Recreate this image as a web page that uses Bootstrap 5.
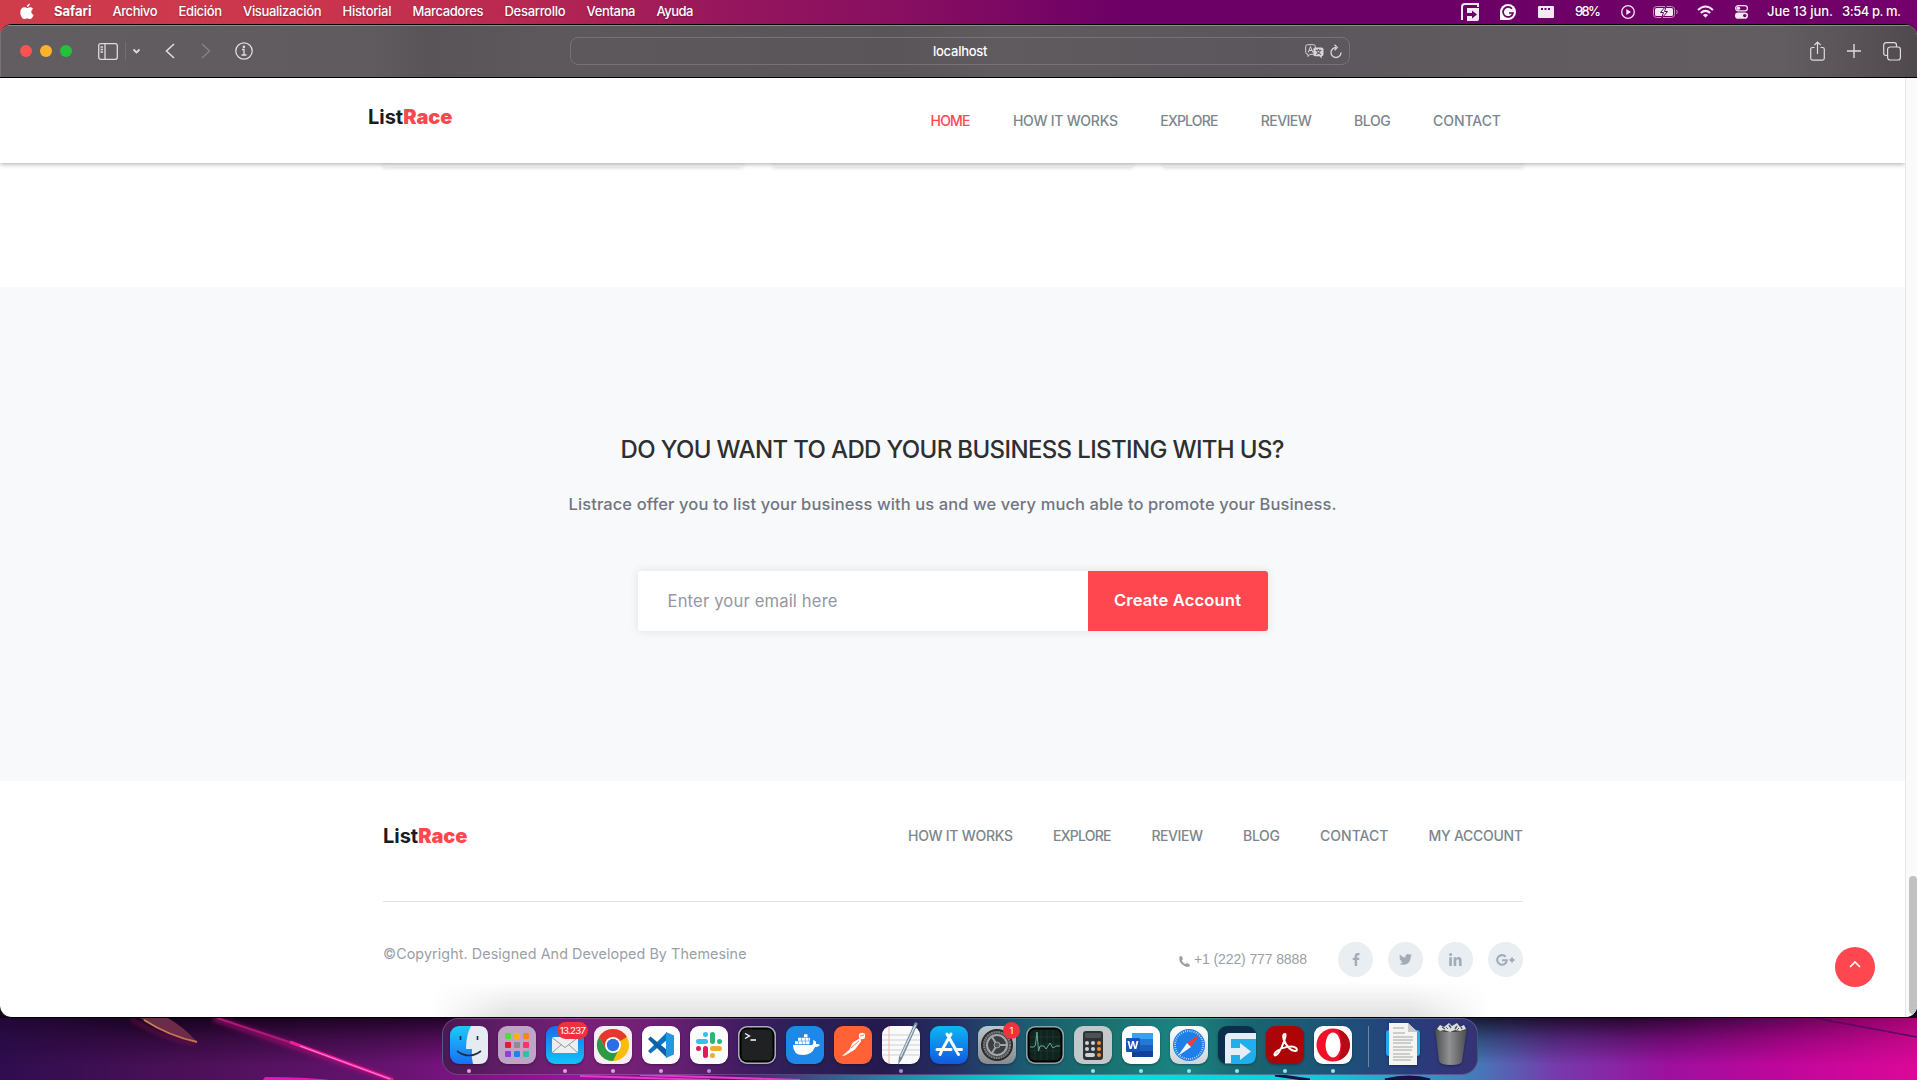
<!DOCTYPE html>
<html lang="es">
<head>
<meta charset="utf-8">
<title>ListRace</title>
<link href="https://cdn.jsdelivr.net/npm/bootstrap@5.3.0/dist/css/bootstrap.min.css" rel="stylesheet">
<style>
:root{--brand:#ff474f}
html,body{height:1080px;overflow:hidden}
body{background:#230a2e;font-family:Inter,"Open Sans",sans-serif;margin:0}
svg{display:block;flex:none}
.fit{display:block;white-space:nowrap;flex:none}
.backdrop-top{background:linear-gradient(90deg,#cf3d4b 0,#cb344d 320px,#b82851 520px,#95165d 730px,#850d61 930px,#6d0066 1120px,#6d0066 1500px,#74016b 1917px) 0 0/100% 60px no-repeat,#12021a}
.menubar{height:24px;color:#fff;font-size:13px;font-weight:500;line-height:23px;padding:0 16px 1px 20px;text-shadow:0 1px 2px #0005}
.menus{gap:21px}
.menus .fit:nth-child(2){margin-left:-1px}
.mac-window{height:994px;border-radius:12px;border:1px solid #000;border-width:1px 0 1px 0;background:#fff;overflow:hidden;position:relative}
.toolbar{height:53px;background:linear-gradient(90deg,#625d61 0,#605b5f 370px,#595457 430px,#5d585c 550px,#5a5559 900px,#605b5f 1000px,#5b565b 1270px,#605b5f 1500px,#625d61 1780px,#575155 1870px,#4f494d 1917px);border-bottom:1px solid #000;box-shadow:inset 0 1px #8e8a8d,inset 1px 0 #777276;flex:none;color:#dedbde}
.light{width:12px;height:12px;border-radius:50%}
.url{width:780px;height:28px;border:1px solid #767276;border-radius:8px;color:#fff;font-size:13px;font-weight:500;padding:0 7px 0 362px;margin-left:-1px;margin-right:1px}
.url .fit{padding-top:1px}
.page{height:939px;flex:none}
.page main{overflow:hidden}
.gutter{width:12px;background:#fafafa;border-left:1px solid #e6e6e6;padding:798px 0 0 3px}
.thumb{width:8px;height:138px;background:#c1c1c1;border-radius:4px}
.site-head{height:85px;background:#fff;box-shadow:0 1px 5px rgba(0,0,0,.34);padding:0 404px 0 368px;position:relative;z-index:2}
.logo{font-weight:700;font-size:20px;line-height:24px;color:#1b1c1e}
.logo b,.on{color:var(--brand)!important}
.links{font-size:14px;font-weight:550;line-height:20px;color:#7b868d}
.g42{gap:42.4px}.g40{gap:40px}
.cards-end{height:124px;padding-left:383px;gap:30px}
.cards-end div{width:360px;height:4px;background:#f7f7f8;box-shadow:0 1px 4px rgba(0,0,0,.14)}
.subscribe{height:494px;background:#f8f9fb;padding-top:145px}
.subscribe h2{font-size:24px;font-weight:550;line-height:36px;color:#2e2f31;margin:0}
.subscribe p{font-size:16.500px;font-weight:500;line-height:24px;color:#71767f;margin:24px 0 55px}
.mailbox{width:630px;height:60px;border-radius:3px;overflow:hidden;background:#fff}
.mail-shadow{border-radius:3px;box-shadow:0 0 10px rgba(71,80,92,.14)}
.mail-hint{width:450px;padding-left:30px;font-size:16.600px;color:#9298a5}
.mail-go{width:180px;background:var(--brand);color:#fff;font-weight:600;font-size:16.600px;padding-bottom:2px}
.site-foot{padding:0 382px 0 383px;height:235px}
.foot-top{height:121px;border-bottom:1px solid #dfe2e6;padding-bottom:10px}
.foot-bottom{height:115px}
.copy{font-size:14.300px;color:#9aa0a6;padding-bottom:12px}
.tel{font-family:"Liberation Sans",Arial,sans-serif;font-size:14px;color:#999fa6;gap:4px;margin-right:31px}
.soc{width:35px;height:35px;border-radius:50%;background:#e9eef3;color:#a4abb8}
.to-top{position:absolute;left:1835px;top:922px;width:40px;height:40px;border-radius:50%;background:var(--brand)}
.dock-haze{position:absolute;left:430px;top:957px;width:1060px;height:36px;background:linear-gradient(#0000,#0000001f);-webkit-mask:linear-gradient(90deg,#0000,#000 80px,#000 980px,#0000);mask:linear-gradient(90deg,#0000,#000 80px,#000 980px,#0000)}
.desktop{height:62px;position:relative}
.wall{position:absolute;left:0;top:0;z-index:-1}
.dock{position:relative;width:1036px;height:57px;margin-left:442px;border-radius:16px;border:1px solid #ffffff2e;background:linear-gradient(90deg,#4a1954 0,#631d69 70px,#7b2079 150px,#6d2075 220px,#401c60 300px,#2f2058 340px,#241a4d 440px,#263064 510px,#1c5a70 580px,#19716f 660px,#1a8583 740px,#19666f 800px,#1d5179 900px,#293c7c 970px,#363274 1036px);padding:7px 7px 0}
.app{width:38px;height:38px;position:relative;margin-right:10px;flex:none}
.app>svg{overflow:visible;filter:drop-shadow(0 1px 1px #0005)}
.run::after{content:"";position:absolute;left:17px;top:43px;width:4px;height:4px;border-radius:50%;background:#8ee8f2}
.run.pk::after{background:#e49be0}.run.lv::after{background:#a78fd8}
.note{position:absolute;top:-4px;height:17px;border-radius:9px;background:#f0323c;color:#fff;font-size:9.600px;line-height:17px;text-align:center}
.dsep{width:1px;height:41px;background:#ffffff55;margin:0 20px 0 6px}
</style>
</head>
<body>
<svg width="0" height="0" class="position-absolute"><defs>
<linearGradient id="blu" x2="0" y2="1"><stop stop-color="#1ec8fb"/><stop offset="1" stop-color="#1671f5"/></linearGradient>
<linearGradient id="blu2" x2="0" y2="1"><stop stop-color="#0db6f5"/><stop offset="1" stop-color="#1259df"/></linearGradient>
<linearGradient id="mailg" x2="0" y2="1"><stop stop-color="#1a6af0"/><stop offset="1" stop-color="#10c4fb"/></linearGradient>
<linearGradient id="gry" x2="0" y2="1"><stop stop-color="#fff"/><stop offset="1" stop-color="#cfd4d8"/></linearGradient>
<linearGradient id="met" x2="0" y2="1"><stop stop-color="#b8c8cc"/><stop offset="1" stop-color="#8a8b8c"/></linearGradient>
<linearGradient id="bin"><stop stop-color="#4c4e50"/><stop offset=".45" stop-color="#8f9193"/><stop offset="1" stop-color="#4a4b4d"/></linearGradient>
</defs></svg>

<div class="backdrop-top">
<header class="menubar d-flex justify-content-between align-items-center">
  <div class="menus d-flex align-items-center">
    <svg width="14" height="18" viewBox="0 0 14 18" fill="#fff"><path d="M9.800.4C9.900 2 8.600 3.800 7 3.900 6.800 2.300 8.300.6 9.800.4ZM7.100 5C7.800 5 8.700 4.200 10 4.200c1.300 0 2.500.7 3.100 1.600-2.600 1.500-2.200 5 .5 6.100-.7 1.900-2.100 4.200-3.500 4.200-1.100 0-1.500-.7-2.900-.7s-1.800.7-2.800.7C2.500 16.100.3 12.700.3 9.400c0-3.300 2.100-5.100 4-5.100C5.600 4.300 6.400 5 7.100 5Z"/></svg>
    <span class="fit fw-bold" data-w="37.500">Safari</span><span class="fit" data-w="45">Archivo</span><span class="fit" data-w="43.500">Edición</span><span class="fit" data-w="78.500">Visualización</span><span class="fit" data-w="49">Historial</span><span class="fit" data-w="71">Marcadores</span><span class="fit" data-w="61">Desarrollo</span><span class="fit" data-w="49">Ventana</span><span class="fit" data-w="37">Ayuda</span>
  </div>
  <div class="d-flex align-items-center">
    <svg width="18" height="18" viewBox="0 0 18 18" fill="none" stroke="#f4e8f3"><path stroke-width="2" d="M1 17V4q0-3 3-3h13v3"/><path fill="#f4e8f3" stroke="none" d="M6 5h12v11q0 2-2 2H6Z"/><path d="M6 11h8M6 14.500h5" stroke="#6d0066" stroke-width="0"/><path d="M6 10h5V7.500l5 4-5 4V13H6Z" fill="#6d0066" stroke="none"/></svg>
    <svg style="margin-left:21px" width="16" height="16" viewBox="0 0 16 16"><path d="M8 0a8 8 0 1 1 0 16H0V8a8 8 0 0 1 8-8Z" fill="#fff"/><path d="M12 4.800A5 5 0 1 0 13 9H9" fill="none" stroke="#6d0066" stroke-width="1.700"/></svg>
    <svg style="margin-left:22px" width="16" height="12" viewBox="0 0 16 12"><rect width="16" height="12" rx="1" fill="#f4e8f3"/><path d="M3 3h2m1.500 0h2M10 3h2" stroke="#6d0066" stroke-width="2"/></svg>
    <span class="fit" style="margin-left:21px" data-w="26">98%</span>
    <svg style="margin-left:20px" width="14" height="14" viewBox="0 0 14 14" fill="none" stroke="#f4e8f3" stroke-width="1.300"><circle cx="7" cy="7" r="6.300"/><path d="M5.300 4v6L10 7Z" fill="#f4e8f3" stroke="none"/></svg>
    <svg style="margin-left:18px" width="25" height="12" viewBox="0 0 25 12" fill="none"><rect x=".5" y=".5" width="21" height="11" rx="3" stroke="#c58fc2"/><rect x="2" y="2" width="18" height="8" rx="1.500" fill="#f4e8f3"/><path d="M23.500 4q1.500 2 0 4" stroke="#c58fc2"/><path d="M13.500-.5 7.500 6.500h3L8.500 12.500l6-7h-3Z" fill="#fff" stroke="#6d0066"/></svg>
    <svg style="margin-left:19px" width="17" height="13" viewBox="0 0 17 13" fill="none" stroke="#f4e8f3" stroke-width="2.100"><path d="M1 5q7.500-7 15 0M3.800 8q4.700-4.300 9.400 0"/><path d="m8.500 12.800-2.600-2.900q2.600-2 5.200 0Z" fill="#f4e8f3" stroke="none"/></svg>
    <svg style="margin-left:21px" width="13" height="14" viewBox="0 0 13 14"><rect x=".6" y=".6" width="11.800" height="5.300" rx="2.600" fill="none" stroke="#f4e8f3" stroke-width="1.200"/><circle cx="3.400" cy="3.200" r="1.800" fill="#f4e8f3"/><rect y="7.500" width="13" height="6.300" rx="3.100" fill="#f4e8f3"/><circle cx="9.700" cy="10.600" r="1.700" fill="#6d0066"/></svg>
    <span class="fit" style="margin-left:19px" data-w="66">Jue 13 jun.</span><span class="fit" style="margin-left:9px" data-w="59">3:54 p. m.</span>
  </div>
</header>

<div class="mac-window d-flex flex-column">
  <div class="toolbar d-flex align-items-center justify-content-between" style="padding:0 16px 0 20px">
    <div class="d-flex align-items-center" style="width:550px">
      <div class="d-flex" style="gap:8px"><i class="light" style="background:#ff5350"></i><i class="light" style="background:#fdb12c"></i><i class="light" style="background:#23c23c"></i></div>
      <svg style="margin-left:26px" width="20" height="17" viewBox="0 0 20 17" fill="none" stroke="currentColor" stroke-width="1.300"><rect x=".7" y=".7" width="18.600" height="15.600" rx="2"/><path d="M7 1v15M2.500 4h2.500M2.500 6.500h2.500M2.500 9h2.500"/></svg>
      <svg style="margin-left:7px" width="16" height="18" viewBox="0 0 16 18" fill="none" stroke="currentColor"><path d="M.5 0v18" stroke="#736e72"/><path d="m8.500 7.500 3 3 3-3" stroke-width="1.800"/></svg>
      <svg style="margin-left:24px" width="10" height="16" viewBox="0 0 10 16" fill="none" stroke="currentColor" stroke-width="1.600"><path d="M9 1 1.500 8 9 15"/></svg>
      <svg style="margin-left:26px" width="10" height="16" viewBox="0 0 10 16" fill="none" stroke="#858085" stroke-width="1.500"><path d="m1 1 7.500 7L1 15"/></svg>
      <svg style="margin-left:24px" width="18" height="18" viewBox="0 0 18 18" fill="none" stroke="currentColor" stroke-width="1.300"><circle cx="9" cy="9" r="8.200"/><path d="M7 7.500h2V13M6.500 13h5" /><circle cx="8.900" cy="4.800" r=".7" fill="currentColor"/></svg>
    </div>
    <div class="url d-flex align-items-center justify-content-between"><span class="fit" data-w="54.500">localhost</span>
      <div class="d-flex align-items-center" style="gap:6px"><svg width="19" height="15" viewBox="0 0 19 15"><path d="M2.500.7h6q1.800 0 1.800 1.800v6q0 1.800-1.800 1.800H5L3 12.500V10.300q-2.300 0-2.300-1.800v-6Q.7.7 2.500.7Z" fill="none" stroke="#d7d4d7"/><path d="m3.200 8.500 2.300-6 2.300 6M4 6.500h3" fill="none" stroke="#d7d4d7"/><path d="M10 3.500h6.500q2 0 2 2v4.700q0 2-1.800 2V14.500l-2.300-2.300H10q-1.700 0-1.700-2V5.500q0-2 1.700-2Z" fill="#d7d4d7"/><path d="M10.500 6.300h6M13.500 5v1.300M15.500 6.500q-1 3-4.500 4M11.500 6.500q1 3 4.500 4" fill="none" stroke="#595457"/></svg>
      <svg width="12" height="15" viewBox="0 0 12 15" fill="none" stroke="#d7d4d7" stroke-width="1.300"><path d="M6 3.500a5 5 0 1 0 5 5M4.500.8 7.300 3.600 4.500 6.300"/></svg></div></div>
    <div class="d-flex align-items-center justify-content-end" style="width:549px;gap:22px">
      <svg width="15" height="20" viewBox="0 0 15 20" fill="none" stroke="currentColor" stroke-width="1.200"><path d="M4.500 6.500H2.500Q.7 6.500.7 8.300v9q0 1.800 1.800 1.800h10q1.800 0 1.800-1.800v-9q0-1.800-1.800-1.800h-2M7.500 13V1M4.300 4.200 7.500 1l3.200 3.200"/></svg>
      <svg width="14" height="14" viewBox="0 0 14 14" stroke="currentColor" stroke-width="1.400"><path d="M7 0v14M0 7h14"/></svg>
      <svg width="18" height="19" viewBox="0 0 18 19" fill="none" stroke="currentColor" stroke-width="1.200"><rect x="4.600" y="5" width="12.800" height="13" rx="2.500"/><path d="M4.500 13.500H3.200Q.7 13.500.7 11V3.200Q.7.700 3.200.700H11q2.500 0 2.500 2.500V5"/></svg>
    </div>
  </div>

  <div class="page d-flex">
    <main class="flex-grow-1">
      <nav class="site-head d-flex justify-content-between">
        <a class="logo fit text-decoration-none" style="margin-top:27px" data-w="84.500">List<b>Race</b></a>
        <div class="links d-flex g42" style="margin-top:33px"><span class="fit on" data-w="40">HOME</span><span class="fit" data-w="105">HOW IT WORKS</span><span class="fit" data-w="58">EXPLORE</span><span class="fit" data-w="51">REVIEW</span><span class="fit" data-w="36.500">BLOG</span><span class="fit" data-w="68">CONTACT</span></div>
      </nav>
      <div class="cards-end d-flex"><div></div><div></div><div></div></div>
      <section class="subscribe d-flex flex-column align-items-center">
        <h2 class="fit" data-w="664">DO YOU WANT TO ADD YOUR BUSINESS LISTING WITH US?</h2>
        <p class="fit" data-w="768">Listrace offer you to list your business with us and we very much able to promote your Business.</p>
        <div class="mail-shadow"><div class="mailbox d-flex">
          <div class="mail-hint d-flex align-items-center"><span class="fit" data-w="170">Enter your email here</span></div>
          <div class="mail-go d-flex align-items-center justify-content-center"><span class="fit" data-w="127">Create Account</span></div>
        </div></div>
      </section>
      <footer class="site-foot">
        <div class="foot-top d-flex justify-content-between align-items-center">
          <a class="logo fit text-decoration-none" data-w="84.500">List<b>Race</b></a>
          <div class="links d-flex g40"><span class="fit" data-w="105">HOW IT WORKS</span><span class="fit" data-w="58.500">EXPLORE</span><span class="fit" data-w="51.500">REVIEW</span><span class="fit" data-w="37">BLOG</span><span class="fit" data-w="68.500">CONTACT</span><span class="fit" data-w="94.500">MY ACCOUNT</span></div>
        </div>
        <div class="foot-bottom d-flex justify-content-between align-items-center">
          <span class="copy fit" data-w="363.500">©Copyright. Designed And Developed By Themesine</span>
          <div class="d-flex align-items-center">
            <div class="tel d-flex align-items-center"><svg width="11" height="11" viewBox="0 0 11 11" fill="#999fa6" style="margin-top:3px"><path d="M.5.500 2.500 0 4 3 2.800 4.500q1 2.500 3.500 3.600L8 7l3 1.700-.6 1.700Q8.500 11.500 5.500 10-.8 6.500.5.500Z"/></svg><span class="fit" data-w="113">+1 (222) 777 8888</span></div>
            <div class="d-flex" style="gap:15px">
              <span class="soc d-flex align-items-center justify-content-center"><svg width="8" height="13" viewBox="0 0 8 13" fill="currentColor"><path d="M7.500.1V2.200H6.300q-1.200 0-1.200 1.100v1.400h2.300l-.3 2.200h-2V13H2.700V6.900h-2V4.700h2V3Q2.700 0 5.700 0Z"/></svg></span>
              <span class="soc d-flex align-items-center justify-content-center"><svg width="13" height="11" viewBox="0 0 13 11" fill="currentColor"><path d="M13 1.300q-.5.800-1.300 1.400C11.800 7.500 8.500 10.800 4.100 10.800 2.600 10.800 1.200 10.400 0 9.600q2.200.2 3.900-1.100Q2 8.300 1.400 6.600h1.200Q.6 6 .5 3.900l1.200.3Q-.2 2.700.9.600 3.100 3.300 6.400 3.400C5.900.7 8.900-1 10.900.8L12.600.2q-.3.900-1.100 1.500Z"/></svg></span>
              <span class="soc d-flex align-items-center justify-content-center"><svg width="13" height="13" viewBox="0 0 13 13" fill="currentColor"><circle cx="1.600" cy="1.600" r="1.500"/><path d="M.2 4.200h2.700V13H.2ZM4.600 4.200h2.600v1.200Q8 4 9.600 4 12.600 4 12.600 7.600V13H9.900V8q0-1.800-1.300-1.800Q7.300 6.200 7.300 8v5H4.600Z"/></svg></span>
              <span class="soc d-flex align-items-center justify-content-center"><svg width="19" height="12" viewBox="0 0 19 12" fill="none" stroke="currentColor" stroke-width="2.100"><path d="M9.600 2.700A4.800 4.800 0 1 0 10.800 6.200H6M16 3.500v5M13.500 6h5"/></svg></span>
            </div>
          </div>
        </div>
      </footer>
    </main>
    <div class="gutter"><div class="thumb"></div></div>
  </div>
  <div class="dock-haze"></div>
  <div class="to-top d-flex justify-content-center"><svg style="margin-top:13px" width="12" height="8" viewBox="0 0 12 8" fill="none" stroke="#fff" stroke-width="1.700"><path d="m1 7 5-5 5 5"/></svg></div>
</div>
</div>

<div class="desktop">
  <svg class="wall" width="1917" height="62" viewBox="0 0 1917 62">
    <defs><linearGradient id="w"><stop stop-color="#2f0d4e"/><stop offset=".1" stop-color="#4c1058"/><stop offset=".2" stop-color="#64146e"/><stop offset=".3" stop-color="#a010a0"/><stop offset=".38" stop-color="#581568"/><stop offset=".5" stop-color="#10b0bc"/><stop offset=".55" stop-color="#00e4e0"/><stop offset=".68" stop-color="#08d2dc"/><stop offset=".76" stop-color="#3a88bc"/><stop offset=".81" stop-color="#743cac"/><stop offset=".87" stop-color="#9c109e"/><stop offset=".93" stop-color="#c0069c"/><stop offset="1" stop-color="#dc0898"/></linearGradient>
    <linearGradient id="sh" x2="0" y2="1"><stop stop-color="#0a0010" stop-opacity=".78"/><stop offset=".45" stop-color="#0a0010" stop-opacity=".35"/><stop offset="1" stop-color="#0a0010" stop-opacity="0"/></linearGradient>
    <linearGradient id="sh2"><stop stop-color="#777"/><stop offset=".08" stop-color="#fff"/><stop offset=".85" stop-color="#fff"/><stop offset="1" stop-color="#555"/></linearGradient>
    <mask id="mk"><rect width="1917" height="62" fill="url(#sh2)"/></mask><filter id="bl"><feGaussianBlur stdDeviation="2"/></filter></defs>
    <rect width="1917" height="62" fill="url(#w)"/>
    <rect width="1917" height="46" fill="url(#sh)" mask="url(#mk)"/>
    <path d="m213 0 180 62" stroke="#c00a80" stroke-width="7" opacity=".5" filter="url(#bl)"/>
    <path d="m217 0 78 26" stroke="#b21878" stroke-width="2"/><path d="m290 24 103 38" stroke="#f01c9c" stroke-width="3"/><path d="m300 28 90 33" stroke="#ff8fd0"/>
    <path d="M140 0h28q17 10 29 24Q167 18 140 0Z" fill="#6d2b4a"/><path d="M144 2q25 16 53 22" stroke="#c98350" stroke-width="1.800" fill="none"/><path d="M130 0q30 20 66 26" stroke="#a01848" stroke-width="3" opacity=".5" fill="none" filter="url(#bl)"/>
    <path d="m263 62 2-3q40 0 65 3Z" fill="#f010c0"/>
    <path d="m580 58 130 4M640 57l160 5" stroke="#e838d0" stroke-width="2"/>
    <path d="m1275 57 35 5M1385 62q25-6 45 0" stroke="#15124a" stroke-width="3" fill="#15124a"/>
    <path d="m1815 0 102 19" stroke="#5a0660" stroke-width="1.500"/>
  </svg>
  <div class="dock d-flex align-items-start">
    <div class="app run pk"><svg width="38" height="38"><rect width="38" height="38" rx="9" fill="url(#blu)"/><path d="M21 0h8q9 0 9 9v20q0 9-9 9h-6q-2-7-1-15h-6Q16 9 21 0Z" fill="#e6ebf2"/><path d="M10.500 10v4M27.500 10v4M7 25q12 9 24 0" stroke="#1c2c45" stroke-width="1.600" fill="none"/></svg></div>
    <div class="app"><svg width="38" height="38"><rect width="38" height="38" rx="9" fill="#bfa5c5"/><rect x="7" y="7" width="6" height="6" rx="1" fill="#4fdc3c"/><rect x="16" y="7" width="6" height="6" rx="1" fill="#ffae16"/><rect x="25" y="7" width="6" height="6" rx="1" fill="#ff841a"/><rect x="7" y="16" width="6" height="6" rx="1" fill="#e41c26"/><rect x="16" y="16" width="6" height="6" rx="1" fill="#8f8b92"/><rect x="25" y="16" width="6" height="6" rx="1" fill="#fb365d"/><rect x="7" y="25" width="6" height="6" rx="1" fill="#8d3fd8"/><rect x="16" y="25" width="6" height="6" rx="1" fill="#1684fa"/><rect x="25" y="25" width="6" height="6" rx="1" fill="#24c7a4"/></svg></div>
    <div class="app run pk"><svg width="38" height="38"><rect width="38" height="38" rx="9" fill="url(#mailg)"/><rect x="6" y="11" width="26" height="16" rx="2" fill="#eceef0"/><path d="m6.500 12 12.500 9.500L31.500 12M6.500 26.500l9-8M31.500 26.500l-9-8" fill="none" stroke="#95989c"/></svg><span class="note" style="left:11px;width:31px"><span class="fit d-inline-block" data-w="26">13.237</span></span></div>
    <div class="app run pk"><svg width="38" height="38"><rect width="38" height="38" rx="9" fill="#f4eff5"/><circle cx="19" cy="19" r="16" fill="#fbbd0c"/><path d="M19 19 5.100 11A16 16 0 0 1 32.900 11Z" fill="#e3382b"/><path d="M5.100 11 12 23l7-12h13.900" fill="#e3382b"/><path d="M5.100 11 12 23l7 4 5-2-5 10A16 16 0 0 1 5.100 11Z" fill="#2a9a47"/><circle cx="19" cy="19" r="8" fill="#fff"/><circle cx="19" cy="19" r="6.200" fill="#2c6fe4"/></svg></div>
    <div class="app run pk"><svg width="38" height="38"><rect width="38" height="38" rx="9" fill="#fff"/><path d="M25 6v8L8.500 27.500 6 25 25 6Z" fill="#0874be"/><path d="M25 32v-8L8.500 10.500 6 13Z" fill="#0c5fa8"/><path d="m24 6 8 3.500v19L24 32Z" fill="#2398e0"/></svg></div>
    <div class="app run lv"><svg width="38" height="38" fill="none" stroke-width="5" stroke-linecap="round"><rect width="38" height="38" rx="9" fill="#fdfcfd"/><path d="M15.500 8.500v.1M8.500 15.500h7" stroke="#36c0ee"/><path d="M22.500 8.500v7M29.500 15.500v.1" stroke="#2eb47c"/><path d="M22.500 29.500v.1M22.500 22.500h7" stroke="#e9ae34"/><path d="M15.500 22.500v7M8.500 22.500v.1" stroke="#de1d58"/></svg></div>
    <div class="app"><svg width="38" height="38"><rect width="38" height="38" rx="9" fill="#a5b0b3"/><rect x="1.500" y="1.500" width="35" height="35" rx="8" fill="#000"/><rect x="3.500" y="3.500" width="31" height="31" rx="5" fill="#202122"/><path d="m7 7.500 4.500 2.500L7 12.500M12.500 14h5.500" stroke="#fff" stroke-width="1.300" fill="none"/></svg></div>
    <div class="app"><svg width="38" height="38"><rect width="38" height="38" rx="9" fill="#1d87ea"/><path d="M7 19h19q2-1 1-5 4 1 3 4 3-.5 4 1-2 2.500-5 2Q26 29 17 29 7 29 7 19Z" fill="#fff"/><path d="M9 16.800h15M12 13.300h12M18 9.800h4" stroke="#fff" stroke-width="3" stroke-dasharray="3.200 .5"/></svg></div>
    <div class="app"><svg width="38" height="38"><rect width="38" height="38" rx="9" fill="#ff6237"/><circle cx="28" cy="10" r="3.200" fill="#fff"/><path d="m26.500 12-8 4.500-3 7-7.500 6.500 3-.5 10-6 6-8Z" fill="#fff"/><path d="m17 22 8-7M26 10l4-1" stroke="#ff6237" stroke-width=".8"/></svg></div>
    <div class="app run lv"><svg width="38" height="38"><rect width="38" height="38" rx="9" fill="#fafafa"/><path d="M0 9h38M0 14h38M0 19h38M0 24h38M0 29h38" stroke="#cdd0d3"/><path d="M7 0v38" stroke="#f1b6ae"/><path d="m33-4 3 1.500L20 33l-4 6 1-8Z" fill="#75899a"/><path d="M33.500-1 18.500 31" stroke="#d4e0e8" stroke-width="1.300"/></svg></div>
    <div class="app"><svg width="38" height="38"><rect width="38" height="38" rx="9" fill="url(#blu2)"/><path d="m21 8-9.500 17M17 8l9.500 17M11 26.500l-1 2M27.500 27l1 1.500M7 23.500h14M25.500 23.500h6" stroke="#fff" stroke-width="3" stroke-linecap="round"/></svg></div>
    <div class="app"><svg width="38" height="38" fill="none"><rect width="38" height="38" rx="9" fill="url(#met)"/><circle cx="19" cy="19" r="15" fill="#4a4d4f" stroke="#292b2d" stroke-width="2"/><circle cx="19" cy="19" r="13" stroke="#808385" stroke-width="2" stroke-dasharray="1.500 1"/><circle cx="19" cy="19" r="10" fill="#3c3e40" stroke="#a3a6a8" stroke-width="2"/><path d="M19 19h9M19 19l-5-8M19 19l-5 8" stroke="#a3a6a8" stroke-width="2"/><circle cx="19" cy="19" r="3" fill="#55585a" stroke="#a3a6a8"/></svg><span class="note" style="left:25px;width:17px">1</span></div>
    <div class="app"><svg width="38" height="38"><rect width="38" height="38" rx="9" fill="#93a3a5"/><rect x="1.500" y="1.500" width="35" height="35" rx="8" fill="#000"/><rect x="3.500" y="3.500" width="31" height="31" rx="5" fill="#10231f"/><path d="M9 4v30M15 4v30M21 4v30M27 4v30M4 11h30M4 18h30M4 25h30" stroke="#24423b" stroke-width=".6"/><path d="M4 21h4l1.500-2L11 6l1.500 19 1.500-5h4l2 3 4-6 3 5 3-2h4" stroke="#5fae96" fill="none"/></svg></div>
    <div class="app run"><svg width="38" height="38"><rect width="38" height="38" rx="9" fill="#c4c7c9"/><rect x="9" y="5" width="20" height="29" rx="3" fill="#2f3234"/><rect x="11" y="7" width="16" height="5" rx="1" fill="#4e5254"/><g fill="#cfd2d4"><circle cx="13" cy="17" r="2"/><circle cx="19" cy="17" r="2"/><circle cx="13" cy="23" r="2"/><circle cx="19" cy="23" r="2"/><rect x="11" y="27" width="10" height="4" rx="2"/></g><g fill="#ff8c1a"><circle cx="25" cy="17" r="2"/><circle cx="25" cy="23" r="2"/><circle cx="25" cy="29" r="2"/></g></svg></div>
    <div class="app run"><svg width="38" height="38"><rect width="38" height="38" rx="9" fill="#fff"/><path d="M10 7h21v6H10Z" fill="#3aa2ec"/><path d="M10 13h21v6H10Z" fill="#2479d4"/><path d="M10 19h21v6H10Z" fill="#1b5ebe"/><path d="M10 25h21v6H10Z" fill="#12409a"/><rect x="4" y="12" width="14" height="14" rx="1" fill="#1853b4"/><text x="11" y="23" font-size="11" font-weight="700" fill="#fff" text-anchor="middle">W</text></svg></div>
    <div class="app run"><svg width="38" height="38"><rect width="38" height="38" rx="9" fill="url(#gry)"/><circle cx="19" cy="19" r="16" fill="#1f7fe8"/><circle cx="19" cy="19" r="14" fill="none" stroke="#bfe0fb" stroke-width="2" stroke-dasharray=".8 1.400"/><path d="m30 8-13 9 4 4Z" fill="#f23b36"/><path d="m8 30 9-13 4 4Z" fill="#f5f7f9"/></svg></div>
    <div class="app run"><svg width="38" height="38"><rect width="38" height="38" rx="9" fill="#0c2e4c"/><path d="M7 12q0-5 5-5h26v22q0 9-9 9H7Z" fill="#22aeea"/><path d="M7 37V12q0-5 5-5h26v6H13v9h9v-5l11 8.500L22 34v-5h-9v8Z" fill="#e4edf8"/></svg></div>
    <div class="app run"><svg width="38" height="38"><rect width="38" height="38" rx="9" fill="#ad0507"/><path d="M19 8c-4 0-1 9 4 14s10 3 7 0-14-1-19 3-2 7 2 1 8-18 6-18Z" fill="none" stroke="#fff" stroke-width="2"/></svg></div>
    <div class="app run"><svg width="38" height="38"><rect width="38" height="38" rx="9" fill="#fff"/><circle cx="19" cy="19" r="16.500" fill="#f01327"/><path d="M24 3.500a16 16 0 0 1 0 31Q31 19 24 3.500Z" fill="#b90818"/><ellipse cx="19" cy="19" rx="7.500" ry="12.500" fill="#fff"/></svg></div>
    <div class="dsep"></div>
    <div class="app" style="margin-left:-5px"><svg width="38" height="38"><rect x="2" y="4" width="34" height="26" rx="3" fill="#27a8ec"/><path d="M7-3h17l9 9v33H5V-3Z" fill="#f4f4f2"/><path d="M24-3v9h10Z" fill="#c6c8c9"/><path d="M9 2h11M9 7h12M9 11h20M9 14h20M9 17h18M9 21h20M9 24h19M9 28h17M9 31h20M9 34h18" stroke="#9b9c9d" stroke-width=".9"/></svg></div>
    <div class="app m-0"><svg width="38" height="38"><path d="m3 2 4 33q1 4 12 4t11-4l5-33Z" fill="url(#bin)"/><ellipse cx="19" cy="2.500" rx="16" ry="3.500" fill="#3d3f40"/><path d="m5 3 3-4 4 2 5-4 3 3 5-3 3 4 4-2 2 4-6 2-5-1-5 2-6-2-4 1Z" fill="#dfe0dd"/><path d="m10 1 3 2M17-1l2 3M25 0l-2 3M29 1l1 2" stroke="#385f8a" stroke-width="1.500"/><path d="m14 1 2 2M27 2l-2 2" stroke="#a8542a"/></svg></div>
  </div>
</div>
<script src="https://cdn.jsdelivr.net/npm/bootstrap@5.3.0/dist/js/bootstrap.bundle.min.js"></script>
<script>
// Tracks each label so that it fills its design width (data-w, in px).
document.querySelectorAll('.fit').forEach(function (el) {
  var r = document.createRange();
  r.selectNodeContents(el);
  var gap = (el.dataset.w - r.getBoundingClientRect().width) / (el.textContent.length - 1);
  el.style.letterSpacing = gap + 'px';
  el.style.width = el.dataset.w + 'px';
});
</script>
</body>
</html>
